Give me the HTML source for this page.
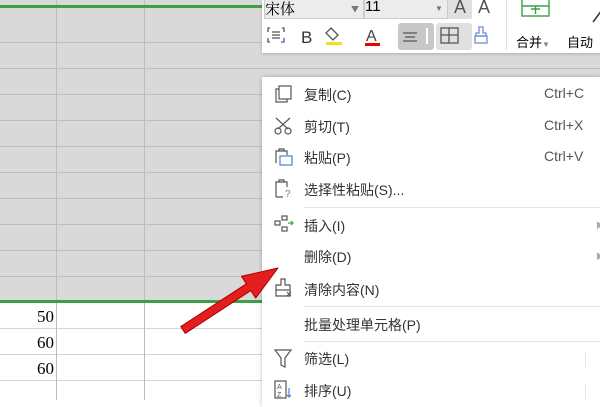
<html><head><style>
body{margin:0;width:600px;height:400px;overflow:hidden;position:relative;background:#fff;font-family:"Liberation Sans","Noto Sans CJK SC",sans-serif}
.a{position:absolute}
.gray{left:0;top:0;width:600px;height:302px;background:#d9d9d9}
.hl{height:1px;background:#bdbdbd;left:0;width:600px}
.vl{width:1px;background:#bdbdbd;top:0;height:400px}
.grn{height:3px;background:#3f9e48;left:0;width:262px}
.num{font-family:"Liberation Serif",serif;font-size:17px;right:546px}
.menu{left:262px;top:77px;width:340px;height:330px;background:#fff;box-shadow:0 0 4px rgba(0,0,0,.25)}
.it{position:absolute;left:42px;font-size:14px;color:#333}
.sc{position:absolute;left:282px;font-size:14px;color:#555}
.sep{position:absolute;left:42px;right:0;height:1px;background:#e5e5e5}
.tb{left:262px;top:0;width:340px;height:53px;background:#fff;box-shadow:0 1px 3px rgba(0,0,0,.2)}
.ic{position:absolute;stroke:#555;fill:none;stroke-width:1.2}
</style></head><body>
<div class="a gray"></div>
<div class="a hl" style="top:42px"></div><div class="a hl" style="top:68px"></div><div class="a hl" style="top:94px"></div><div class="a hl" style="top:120px"></div><div class="a hl" style="top:146px"></div><div class="a hl" style="top:172px"></div><div class="a hl" style="top:198px"></div><div class="a hl" style="top:224px"></div><div class="a hl" style="top:250px"></div><div class="a hl" style="top:276px"></div><div class="a hl" style="top:328px;background:#d4d4d4"></div><div class="a hl" style="top:354px;background:#d4d4d4"></div><div class="a hl" style="top:380px;background:#d4d4d4"></div>
<div class="a vl" style="left:56px"></div><div class="a vl" style="left:144px"></div>
<div class="a grn" style="top:5px"></div><div class="a grn" style="top:300px"></div>
<div class="a num" style="top:307px">50</div><div class="a num" style="top:333px">60</div><div class="a num" style="top:359px">60</div>
<div class="a tb">
<div class="a" style="left:2px;top:-3px;width:98px;height:20px;background:#ececec;border:1px solid #ccc;font-size:15px;font-family:'Noto Serif CJK SC',serif">宋体<span style="position:absolute;left:86px;font-size:8px;top:6px;color:#777">▼</span></div>
<div class="a" style="left:102px;top:-3px;width:82px;height:20px;background:#ececec;border:1px solid #ccc;font-size:15px">11<span style="position:absolute;left:70px;font-size:8px;top:6px;color:#777">▼</span></div>
<div class="a" style="left:186px;top:-3px;width:24px;height:22px;background:#e0e0e0;font-size:18px;color:#555;text-align:center">A</div>
<div class="a" style="left:216px;top:-3px;font-size:18px;color:#555">A</div>
<div class="a" style="left:244px;top:0;width:1px;height:50px;background:#ddd"></div>
<svg class="ic" style="left:258px;top:0" width="32" height="20"><rect x="2" y="-4" width="27" height="20" stroke="#3f9e48" stroke-width="1.4"/><path d="M2 6H29M15.5 6V14M11 9H20" stroke="#3f9e48" stroke-width="1.4"/></svg>
<svg class="ic" style="left:330px;top:0" width="12" height="24"><path d="M1 22L10 10" stroke="#333" stroke-width="1.5"/></svg>
<div class="a" style="left:254px;top:32px;font-size:13px">合并<span style="font-size:8px;color:#888">▼</span></div>
<div class="a" style="left:305px;top:32px;font-size:13px">自动</div>
<div class="a" style="left:136px;top:23px;width:36px;height:27px;background:#c8c8c8;border-radius:3px"></div>
<div class="a" style="left:174px;top:23px;width:36px;height:27px;background:#e0e0e0;border-radius:3px"></div>
<svg class="a" style="left:0;top:24px" width="240" height="26" fill="none" stroke="#555" stroke-width="1.3">
<path d="M8 4h-2v4M6 14v4h2M20 4h2v4M22 14v4h-3" stroke="#555"/><path d="M10 8h8M10 11h8M10 14h8" /><path d="M19 18h3v-3" stroke="#4a7fd0"/>
<text x="39" y="19" font-size="17" fill="#333" stroke="none" font-family="Liberation Sans">B</text>
<path d="M69 4l7 7-5 5-7-7z"/><rect x="64" y="18" width="16" height="3" fill="#f0e020" stroke="none"/>
<text x="104" y="17" font-size="16" fill="#444" stroke="none" font-family="Liberation Sans">A</text><rect x="103" y="19" width="15" height="3" fill="#e00" stroke="none"/>
<path d="M141 9h14M143 13h10M141 17h14"/><rect x="164" y="4" width="2" height="16" fill="#fff" stroke="none"/>
<rect x="179" y="4" width="17" height="15"/><path d="M187 4v15M179 11h17"/>
<path d="M217 3h4v6h3v3h-10v-3h3z" stroke="#6a8fcf"/><rect x="213" y="12" width="12" height="7" stroke="#6a8fcf"/>
</svg>
</div>
<div class="a menu">
<svg class="ic" style="left:13px;top:8px" width="18" height="18"><rect x="4" y="1" width="12" height="13"/><path d="M4 4H1v13h11v-3"/></svg>
<div class="it" style="top:8px">复制(C)</div><div class="sc" style="top:8px">Ctrl+C</div>
<svg class="ic" style="left:12px;top:40px" width="18" height="18"><path d="M2 1l12 11M16 1L4 12"/><circle cx="4" cy="14" r="3"/><circle cx="14" cy="14" r="3"/></svg>
<div class="it" style="top:40px">剪切(T)</div><div class="sc" style="top:40px">Ctrl+X</div>
<svg class="ic" style="left:12px;top:71px" width="20" height="18"><path d="M2 15V3h11v4M5 3V1h5v2"/><rect x="6" y="8" width="12" height="9" stroke="#4a7fd0"/></svg>
<div class="it" style="top:71px">粘贴(P)</div><div class="sc" style="top:71px">Ctrl+V</div>
<svg class="ic" style="left:12px;top:102px" width="20" height="20"><path d="M2 18V3h11v5M5 3V1h5v2M2 18h7"/><text x="11" y="18" font-size="10" fill="#3f9e48" stroke="none">?</text></svg>
<div class="it" style="top:103px">选择性粘贴(S)...</div>
<div class="sep" style="top:130px"></div>
<svg class="ic" style="left:12px;top:138px" width="20" height="18"><rect x="1" y="6" width="5" height="4"/><rect x="8" y="1" width="5" height="4"/><rect x="8" y="12" width="5" height="4"/><path d="M14 8h5M17 6l2 2-2 2" stroke="#3f9e48"/></svg>
<div class="it" style="top:139px">插入(I)</div><div class="a" style="left:334px;top:143px;font-size:8px;color:#aaa">▶</div>
<div class="it" style="top:170px">删除(D)</div><div class="a" style="left:334px;top:174px;font-size:8px;color:#aaa">▶</div>
<svg class="ic" style="left:13px;top:201px" width="20" height="20"><path d="M6 1h4v6h5v11H1V7h5z"/><path d="M1 12h14"/><path d="M12 14l4 4M16 14l-4 4" stroke-width="1"/></svg>
<div class="it" style="top:203px">清除内容(N)</div>
<div class="sep" style="top:229px"></div>
<div class="it" style="top:238px">批量处理单元格(P)</div>
<div class="sep" style="top:264px"></div>
<svg class="ic" style="left:12px;top:272px" width="18" height="20"><path d="M1 1h16l-6 8v9l-4-2V9z"/></svg>
<div class="it" style="top:272px">筛选(L)</div><div class="a" style="left:323px;top:274px;width:1px;height:16px;background:#e5e5e5"></div>
<svg class="ic" style="left:12px;top:303px" width="20" height="20"><rect x="1" y="1" width="11" height="17"/><text x="3" y="9" font-size="7" fill="#555" stroke="none">A</text><text x="3" y="17" font-size="7" fill="#555" stroke="none">Z</text><path d="M15 8v9M13 15l2 2 2-2" stroke="#4a7fd0"/></svg>
<div class="it" style="top:304px">排序(U)</div><div class="a" style="left:323px;top:306px;width:1px;height:16px;background:#e5e5e5"></div>
</div>
<svg class="a" style="left:0;top:0" width="600" height="400"><path d="M180.8 326.6 L246.4 283.8 L241.5 276.3 L278 268 L255.7 298.1 L250.8 290.6 L185.2 333.4 Z" fill="#e41e1e" stroke="#a00" stroke-width="1" stroke-linejoin="round"/></svg>
</body></html>
